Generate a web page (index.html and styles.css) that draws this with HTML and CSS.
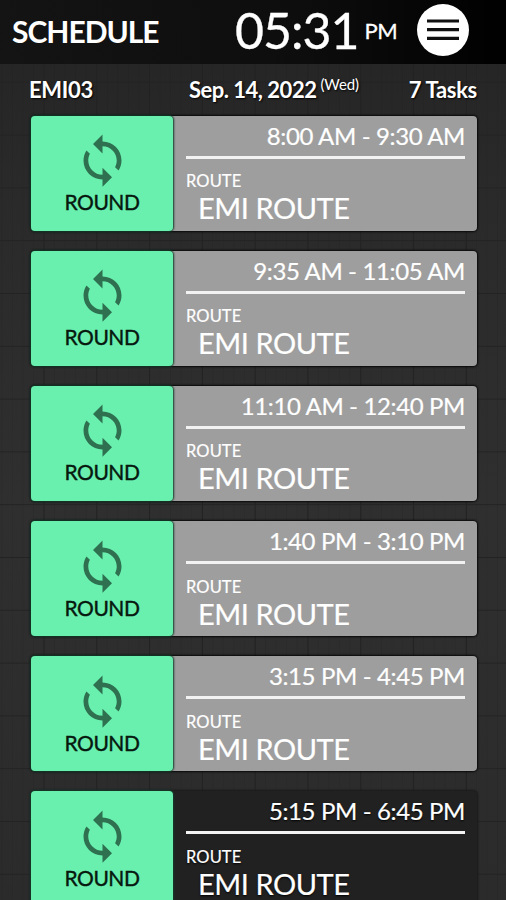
FILE: index.html
```html
<!DOCTYPE html>
<html lang="en">
<head>
<meta charset="utf-8">
<title>Schedule</title>
<link rel="stylesheet" href="styles.css">
</head>
<body>
<svg class="defs" width="0" height="0"><symbol id="loop" viewBox="0 0 24 24"><path d="M12 4V1L8 5l4 4V6c3.31 0 6 2.69 6 6 0 1.01-.25 1.97-.7 2.8l1.46 1.46C19.54 15.03 20 13.57 20 12c0-4.42-3.58-8-8-8zm0 14c-3.31 0-6-2.69-6-6 0-1.01.25-1.97.7-2.8L5.24 7.74C4.46 8.97 4 10.43 4 12c0 4.42 3.58 8 8 8v3l4-4-4-4v3z"/></symbol></svg>
<header class="topbar">
  <h1 class="title">SCHEDULE</h1>
  <div class="clock"><span class="time">05:31</span><span class="meridiem">PM</span></div>
  <button class="menu" aria-label="Menu"><svg width="32" height="22" viewBox="0 0 32 22"><path d="M0 2h32M0 10.7h32M0 19.4h32"/></svg></button>
</header>
<div class="summary">
  <span class="unit">EMI03</span>
  <span class="date">Sep. 14, 2022<span class="day">(Wed)</span></span>
  <span class="count">7 Tasks</span>
</div>
<main class="tasks">
  <article class="task"><div class="kind"><svg class="icon"><use href="#loop"/></svg><span class="kind-name">ROUND</span></div><div class="info"><div class="hours">8:00 AM - 9:30 AM</div><div class="label">ROUTE</div><div class="route">EMI ROUTE</div></div></article>
  <article class="task"><div class="kind"><svg class="icon"><use href="#loop"/></svg><span class="kind-name">ROUND</span></div><div class="info"><div class="hours">9:35 AM - 11:05 AM</div><div class="label">ROUTE</div><div class="route">EMI ROUTE</div></div></article>
  <article class="task"><div class="kind"><svg class="icon"><use href="#loop"/></svg><span class="kind-name">ROUND</span></div><div class="info"><div class="hours">11:10 AM - 12:40 PM</div><div class="label">ROUTE</div><div class="route">EMI ROUTE</div></div></article>
  <article class="task"><div class="kind"><svg class="icon"><use href="#loop"/></svg><span class="kind-name">ROUND</span></div><div class="info"><div class="hours">1:40 PM - 3:10 PM</div><div class="label">ROUTE</div><div class="route">EMI ROUTE</div></div></article>
  <article class="task"><div class="kind"><svg class="icon"><use href="#loop"/></svg><span class="kind-name">ROUND</span></div><div class="info"><div class="hours">3:15 PM - 4:45 PM</div><div class="label">ROUTE</div><div class="route">EMI ROUTE</div></div></article>
  <article class="task current"><div class="kind"><svg class="icon"><use href="#loop"/></svg><span class="kind-name">ROUND</span></div><div class="info"><div class="hours">5:15 PM - 6:45 PM</div><div class="label">ROUTE</div><div class="route">EMI ROUTE</div></div></article>
</main>
</body>
</html>
```
FILE: styles.css
```css
* { box-sizing: border-box; }
html { height: 100%; overflow: hidden; }
body {
  margin: 0;
  height: 900px;
  overflow: hidden;
  color: #fff;
  font-family: Lato, "Liberation Sans", sans-serif;
  background-color: #292929;
  background-image:
    linear-gradient(90deg, #222 1px, transparent 1px),
    linear-gradient(#232323 1px, transparent 1px),
    linear-gradient(90deg, rgba(0,0,0,.06) 1px, transparent 1px),
    linear-gradient(#242424, #2a2a2a 200px, #2f2f2f 500px, #2b2b2b);
  background-size: 52.8px 100%, 100% 52.8px, 10.56px 100%, 100% 100%;
  background-position: 43.5px 0, 0 29px, 43.5px 0, 0 0;
}
.defs { position: absolute; }
.topbar {
  display: flex;
  align-items: center;
  height: 64px;
  padding: 0 37px 4px 12px;
  background: linear-gradient(90deg, rgba(18,18,18,.9), rgba(12,12,12,.96) 60%, #000);
}
.title {
  margin: 1px 0 0;
  width: 223px;
  font-size: 30px;
  line-height: 36px;
  font-weight: 700;
  letter-spacing: -1px;
}
.clock { display: flex; align-items: baseline; flex: 1; white-space: nowrap; -webkit-text-stroke: .3px #fff; }
.time { width: 129.5px; font-size: 50px; line-height: 56px; letter-spacing: -1px; }
.meridiem { position: relative; top: -10px; font-size: 22px; letter-spacing: -.5px; }
.menu {
  display: grid;
  place-items: center;
  width: 52px;
  height: 52px;
  padding: 0;
  border: 0;
  border-radius: 50%;
  background: #fff;
}
.menu path { stroke: #111; stroke-width: 3.2; }
.summary {
  display: flex;
  height: 51.5px;
  padding: 12px 29px 0;
  font-size: 22px;
  line-height: 28px;
  font-weight: 700;
  letter-spacing: -.5px;
  text-shadow: 1px 1px 2px #000;
  white-space: nowrap;
}
.unit { width: 160px; letter-spacing: -.3px; }
.day { margin-left: 4px; font-size: 15px; font-weight: 400; letter-spacing: -.1px; position: relative; top: -8px; }
.count { margin-left: auto; letter-spacing: -.3px; }
.tasks { display: grid; gap: 20.2px; padding: 0 29px 0 31px; }
.task {
  display: flex;
  height: 115px;
  border-radius: 4px;
  background: #9e9e9e;
  box-shadow: 0 0 2px 1px #080808;
}
.current { background: #212121; box-shadow: 0 0 2px 1px #191919; }
.kind {
  display: flex;
  flex-direction: column;
  align-items: center;
  width: 142px;
  border-radius: 4px;
  background: #69f0ae;
  box-shadow: 0 0 2px 1px #163c2a;
}
.icon { width: 57px; height: 57px; margin-top: 16.5px; fill: #2e7050; }
.kind-name { font-size: 21px; line-height: 26px; letter-spacing: -.5px; color: #07180f; -webkit-text-stroke: .4px #07180f; }
.info { flex: 1; padding: 5px 12px 0 13px; white-space: nowrap; -webkit-text-stroke: .2px #fff; }
.hours {
  height: 38px;
  border-bottom: 3px solid #f2f2f2;
  font-size: 24px;
  line-height: 30px;
  letter-spacing: -.37px;
  text-align: right;
}
.label { margin-top: 12.5px; font-size: 16.5px; line-height: 20px; letter-spacing: .1px; }
.route { margin: -1px 0 0 12px; font-size: 29px; line-height: 35px; letter-spacing: -.45px; }
.current .info { text-shadow: 0 1px 2px #000; }
```
